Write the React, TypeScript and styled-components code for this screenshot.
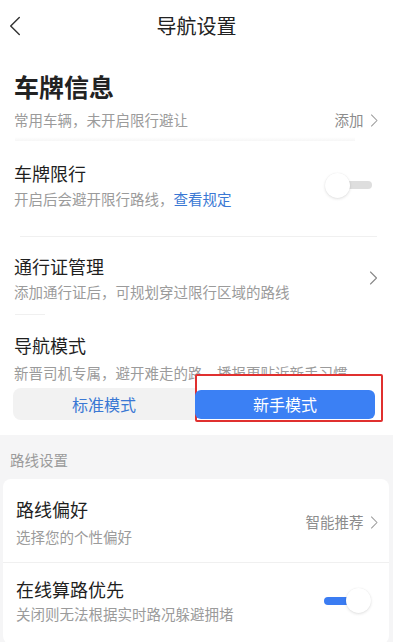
import styled, { createGlobalStyle } from "styled-components";

const GlobalStyle = createGlobalStyle`
  html, body {
    margin: 0;
    padding: 0;
    background: #ffffff;
  }
  body {
    font-family: "Noto Sans CJK SC", "Noto Sans", sans-serif;
    color: #1f1f1f;
    -webkit-font-smoothing: antialiased;
  }
  * {
    box-sizing: border-box;
  }
`;

const Chevron = ({ size = 14, color = "#888", left = false }: { size?: number; color?: string; left?: boolean }) => (
  <svg width={size / 2 + 2} height={size} viewBox="0 0 8 14" fill="none">
    <polyline
      points={left ? "7,1 1,7 7,13" : "1,1 7,7 1,13"}
      stroke={color}
      strokeWidth={left ? 1 : 1.1}
      strokeLinecap="round"
      strokeLinejoin="round"
    />
  </svg>
);

export default function App() {
  return (
    <Page>
      <GlobalStyle />
      <Header>
        <BackButton>
          <Chevron size={20} color="#333" left />
        </BackButton>
        <HeaderTitle>导航设置</HeaderTitle>
      </Header>

      <PlateBlock>
        <BigTitle>车牌信息</BigTitle>
        <SubRow>
          <SubText>常用车辆，未开启限行避让</SubText>
          <Action>
            添加
            <Chevron size={13} color="#999" />
          </Action>
        </SubRow>
      </PlateBlock>
      <Shade />

      <Row $top={20} $bottom={27}>
        <RowText>
          <RowTitle>车牌限行</RowTitle>
          <SubText>
            开启后会避开限行路线，<LinkText>查看规定</LinkText>
          </SubText>
        </RowText>
        <Toggle $on={false}>
          <Track $on={false} />
          <Knob />
        </Toggle>
      </Row>
      <Divider $left={20} $right={16} />

      <Row $top={17} $bottom={12}>
        <RowText>
          <RowTitle>通行证管理</RowTitle>
          <SubText>添加通行证后，可规划穿过限行区域的路线</SubText>
        </RowText>
        <Chevron size={14} color="#888" />
      </Row>
      <Divider $left={15} $width={30} />

      <ModeBlock>
        <RowTitle>导航模式</RowTitle>
        <SubText>新晋司机专属，避开难走的路，播报更贴近新手习惯</SubText>
        <Segmented>
          <SegOption>标准模式</SegOption>
          <SegActive>新手模式</SegActive>
          <Marker />
        </Segmented>
      </ModeBlock>

      <GraySection>
        <SectionLabel>路线设置</SectionLabel>
        <Card>
          <Row $top={18} $bottom={15} $left={13} $right={11}>
            <RowText $gap={6}>
              <RowTitle>路线偏好</RowTitle>
              <SubText>选择您的个性偏好</SubText>
            </RowText>
            <Action>
              智能推荐
              <Chevron size={13} color="#999" />
            </Action>
          </Row>
          <Divider $left={0} $right={0} />
          <Row $top={14} $bottom={20} $left={13} $right={11}>
            <RowText $gap={3}>
              <RowTitle>在线算路优先</RowTitle>
              <SubText>关闭则无法根据实时路况躲避拥堵</SubText>
            </RowText>
            <Toggle $on>
              <Track $on />
              <Knob />
            </Toggle>
          </Row>
        </Card>
      </GraySection>
    </Page>
  );
}

const Page = styled.div`
  width: 393px;
  height: 642px;
  overflow: hidden;
  background: #ffffff;
`;

const Header = styled.header`
  position: relative;
  height: 52px;
  display: flex;
  align-items: center;
  justify-content: center;
`;

const BackButton = styled.div`
  position: absolute;
  left: 9px;
  top: 16px;
  display: flex;
`;

const HeaderTitle = styled.h1`
  margin: 0;
  font-size: 20px;
  font-weight: 400;
  color: #222;
  line-height: 1;
`;

const PlateBlock = styled.section`
  padding: 17px 15px 0 14px;
`;

const BigTitle = styled.h2`
  margin: 0;
  font-size: 25px;
  line-height: 34px;
  font-weight: 700;
  color: #222;
`;

const SubRow = styled.div`
  margin-top: 7px;
  display: flex;
  align-items: center;
  justify-content: space-between;
`;

const SubText = styled.div`
  font-size: 14.5px;
  line-height: 20px;
  color: #9b9b9b;
  white-space: nowrap;
`;

const LinkText = styled.span`
  color: #3a78d4;
`;

const Action = styled.div`
  display: flex;
  align-items: center;
  gap: 6px;
  font-size: 14.5px;
  line-height: 20px;
  color: #8c8c8c;
`;

const Shade = styled.div`
  margin: 7px 38px 0 15px;
  height: 4px;
  background: linear-gradient(#ffffff, #f6f6f6);
`;

const Row = styled.div<{ $top: number; $bottom: number; $left?: number; $right?: number }>`
  display: flex;
  align-items: center;
  justify-content: space-between;
  padding: ${(p) => p.$top}px ${(p) => p.$right ?? 15}px ${(p) => p.$bottom}px
    ${(p) => p.$left ?? 14}px;
`;

const RowText = styled.div<{ $gap?: number }>`
  display: flex;
  flex-direction: column;
  gap: ${(p) => p.$gap ?? 4}px;
`;

const RowTitle = styled.div`
  font-size: 18px;
  line-height: 24px;
  color: #1f1f1f;
`;

const Divider = styled.div<{ $left?: number; $right?: number; $width?: number }>`
  height: 1px;
  background: #f0f0f0;
  margin-left: ${(p) => p.$left ?? 0}px;
  margin-right: ${(p) => p.$right ?? 0}px;
  ${(p) => (p.$width ? `width: ${p.$width}px;` : "")}
`;

const Toggle = styled.div<{ $on: boolean }>`
  position: relative;
  width: 47px;
  height: 26px;
  display: flex;
  align-items: center;
  justify-content: ${(p) => (p.$on ? "flex-end" : "flex-start")};
  margin-right: ${(p) => (p.$on ? 7 : 6)}px;
`;

const Track = styled.div<{ $on: boolean }>`
  position: absolute;
  left: ${(p) => (p.$on ? 0 : 20)}px;
  right: ${(p) => (p.$on ? 20 : 0)}px;
  top: 9px;
  height: 8px;
  border-radius: 4px;
  background: ${(p) => (p.$on ? "#3b7cf2" : "#dedede")};
`;

const Knob = styled.div`
  position: relative;
  width: 25px;
  height: 25px;
  border-radius: 50%;
  background: #ffffff;
  box-shadow: 0 1px 3px rgba(0, 0, 0, 0.12), 0 0 1px rgba(0, 0, 0, 0.08);
`;

const ModeBlock = styled.section`
  padding: 18px 16px 15px 14px;
  display: flex;
  flex-direction: column;
  gap: 6px;
`;

const Segmented = styled.div`
  position: relative;
  margin: -1px 0 0 -1px;
  height: 32px;
  display: flex;
  align-items: center;
  background: #f2f2f2;
  border-radius: 8px;
  padding: 2px 2px 2px 0;
`;

const SegOption = styled.div`
  flex: 1;
  text-align: center;
  font-size: 16px;
  color: #3a78d4;
`;

const SegActive = styled.div`
  position: relative;
  z-index: 2;
  width: 180px;
  height: 29px;
  display: flex;
  align-items: center;
  justify-content: center;
  border-radius: 6px;
  background: #3b80f4;
  color: #ffffff;
  font-size: 16px;
`;

const Marker = styled.div`
  position: absolute;
  z-index: 1;
  left: 182px;
  top: -14px;
  width: 188px;
  height: 48px;
  border: 2px solid #e0302f;
  border-radius: 2px;
  background: #ffffff;
`;

const GraySection = styled.section`
  background: #f5f5f6;
  padding: 15px 4px 20px 3px;
`;

const SectionLabel = styled.div`
  padding-left: 7px;
  font-size: 14.5px;
  line-height: 20px;
  color: #9b9b9b;
`;

const Card = styled.div`
  margin-top: 9px;
  background: #ffffff;
  border-radius: 8px;
`;
